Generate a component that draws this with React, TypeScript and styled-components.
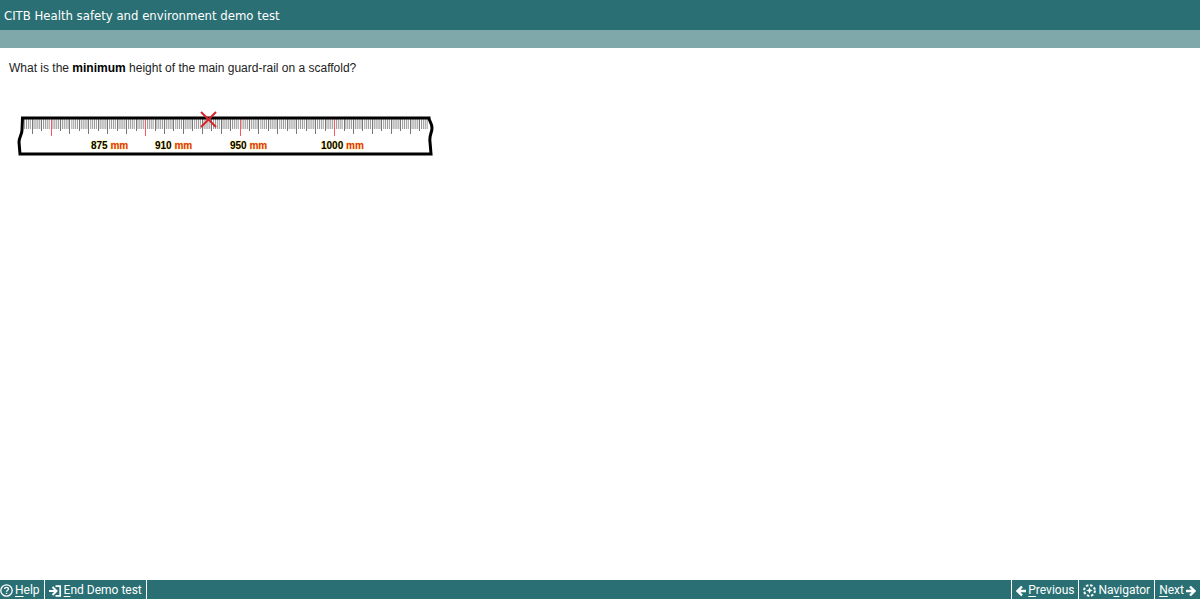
import React from 'react';
import styled, { createGlobalStyle } from 'styled-components';

const GlobalStyle = createGlobalStyle`
  * { box-sizing: border-box; }
  body { margin: 0; background: #fff; }
`;

const Page = styled.div`
  display: flex;
  flex-direction: column;
  min-height: 100vh;
  font-family: 'Liberation Sans', Arial, sans-serif;
  color: #222;
`;

const TitleBar = styled.header`
  background: #296f73;
  padding: 6px 4px 4px;
`;

const Title = styled.h1`
  margin: 0;
  color: #fff;
  font: 400 13px/20px Tahoma, 'DejaVu Sans Condensed', sans-serif;
`;

const SubBar = styled.div`
  height: 18px;
  background: #7fa8aa;
`;

const Content = styled.main`
  flex: 1;
  padding: 10px 9px;
`;

const Question = styled.p`
  margin: 0 0 27px;
  font-size: 12px;
  line-height: 20px;
  b { color: #000; }
`;

const RulerSvg = styled.svg`
  display: block;
  margin-left: 5px;
`;

const FooterBar = styled.footer`
  display: flex;
  justify-content: space-between;
  height: 19px;
  background: #296f73;
`;

const NavGroup = styled.nav`
  display: flex;
`;

const NavButton = styled.button<{ $edge: 'left' | 'right'; $flush?: boolean }>`
  display: flex;
  align-items: center;
  gap: 2px;
  padding: 2px 4px 0;
  padding-left: ${p => (p.$flush ? '0' : '4px')};
  border: 0;
  border-${p => p.$edge}: 1px solid #fff;
  background: none;
  color: #fff;
  font: 400 12px/17px Tahoma, Roboto, sans-serif;
  white-space: nowrap;
  cursor: pointer;
  u { text-underline-offset: 2px; }
  svg { flex: none; }
`;

const FINE_STEP = 1.89;
const TICKS = Array.from({ length: 214 }, (_, i) => i);
const FINE_TICKS = TICKS.filter(i => i % 5 !== 4);
const MAIN_TICKS = TICKS.filter(i => i % 5 === 4);

function mainTick(i: number) {
  if (i % 50 === 14) return { end: 31, color: '#ff5562' };
  return { end: i % 10 === 4 ? 29 : 26, color: '#777' };
}

const LABELS = [
  { x: 77, value: '875' },
  { x: 141, value: '910' },
  { x: 216, value: '950' },
  { x: 307, value: '1000' },
];

function Ruler() {
  return (
    <RulerSvg width="424" height="54" viewBox="0 0 424 54" role="img" aria-label="Ruler">
      {FINE_TICKS.map(i => {
        const x = 10.6 + i * FINE_STEP;
        return <line key={i} x1={x} x2={x} y1="14" y2="24" stroke="#999" strokeWidth="1" />;
      })}
      {MAIN_TICKS.map(i => {
        const t = mainTick(i);
        const x = Math.floor(10.6 + i * FINE_STEP);
        return <rect key={i} x={x} y="14" width="1" height={t.end - 14} fill={t.color} />;
      })}
      <path
        d="M8.5 13H415c0 3 3 5 3 10s-3 7-2 14l1 12H6L5 37c0-5 3-7 3-12z"
        fill="none" stroke="#000" strokeWidth="3"
      />
      <g fontSize="10" fontWeight="700">
        {LABELS.map(l => (
          <text key={l.value} x={l.x} y="44" fill="#000" stroke="#fff3a0" strokeWidth="1" paintOrder="stroke">
            {l.value} <tspan fill="#e03412">mm</tspan>
          </text>
        ))}
      </g>
      <path d="M187 7l15 15M202 7l-15 15" stroke="#d8232a" strokeWidth="2" />
    </RulerSvg>
  );
}

const stroke = { fill: 'none', stroke: '#fff', strokeWidth: 2 };

const HelpIcon = () => (
  <svg width="13" height="13" viewBox="0 0 13 13" fill="none" stroke="#fff">
    <circle cx="6.5" cy="6.5" r="5.7" strokeWidth="1.3" />
    <path d="M4.7 5.1c0-2.3 3.7-2.3 3.7 0 0 1.4-1.9 1.4-1.9 2.7M6.5 8.8v1.2" strokeWidth="1.4" />
  </svg>
);
const ExitIcon = () => (
  <svg width="13" height="12" viewBox="0 0 13 12" {...stroke}>
    <path d="M0 6h7M3.5 2L7.5 6l-4 4" />
    <path d="M6.5 1.2H11.2v9.6H6.5" strokeWidth="1.7" />
  </svg>
);
const BackIcon = () => (
  <svg width="10" height="12" viewBox="0 0 10 12" {...stroke}>
    <path d="M10 6H2M6 1.5L1.5 6 6 10.5" strokeWidth="2.4" />
  </svg>
);
const NextIcon = () => (
  <svg width="10" height="12" viewBox="0 0 10 12" {...stroke}>
    <path d="M0 6h8M4 1.5L8.5 6 4 10.5" strokeWidth="2.4" />
  </svg>
);
const CompassIcon = () => (
  <svg width="13" height="13" viewBox="0 0 13 13" {...stroke}>
    <circle cx="6.5" cy="6.5" r="5.4" strokeWidth="2" strokeDasharray="2.5 1.74" />
    <path d="M6.5 3.2l.9 2.4 2.4.9-2.4.9-.9 2.4-.9-2.4-2.4-.9 2.4-.9z" fill="#fff" stroke="none" />
  </svg>
);

export default function App() {
  return (
    <>
      <GlobalStyle />
      <Page>
        <TitleBar><Title>CITB Health safety and environment demo test</Title></TitleBar>
        <SubBar />
        <Content>
          <Question>What is the <b>minimum</b> height of the main guard-rail on a scaffold?</Question>
          <Ruler />
        </Content>
        <FooterBar>
          <NavGroup aria-label="Test">
            <NavButton type="button" $edge="right" $flush><HelpIcon /><span><u>H</u>elp</span></NavButton>
            <NavButton type="button" $edge="right"><ExitIcon /><span><u>E</u>nd Demo test</span></NavButton>
          </NavGroup>
          <NavGroup aria-label="Questions">
            <NavButton type="button" $edge="left"><BackIcon /><span><u>P</u>revious</span></NavButton>
            <NavButton type="button" $edge="left"><CompassIcon /><span>Na<u>v</u>igator</span></NavButton>
            <NavButton type="button" $edge="left"><span><u>N</u>ext</span><NextIcon /></NavButton>
          </NavGroup>
        </FooterBar>
      </Page>
    </>
  );
}
